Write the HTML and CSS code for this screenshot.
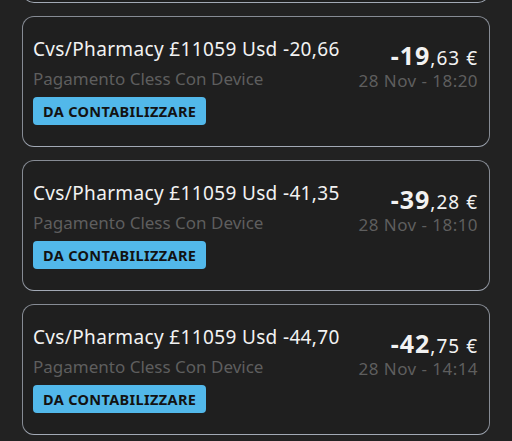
FILE: index.html
```html
<!DOCTYPE html>
<html lang="it">
<head>
<meta charset="utf-8">
<link rel="stylesheet" href="styles.css">
</head>
<body>
<div class="list">
  <div class="card card-empty" aria-hidden="true"></div>
  <div class="card">
    <div class="left">
      <div class="title">Cvs/Pharmacy £11059 Usd -20,66</div>
      <div class="sub">Pagamento Cless Con Device</div>
      <div class="badge">DA CONTABILIZZARE</div>
    </div>
    <div class="right">
      <div class="amount"><span class="int">-19</span>,63 €</div>
      <div class="date">28 Nov - 18:20</div>
    </div>
  </div>
  <div class="card">
    <div class="left">
      <div class="title">Cvs/Pharmacy £11059 Usd -41,35</div>
      <div class="sub">Pagamento Cless Con Device</div>
      <div class="badge">DA CONTABILIZZARE</div>
    </div>
    <div class="right">
      <div class="amount"><span class="int">-39</span>,28 €</div>
      <div class="date">28 Nov - 18:10</div>
    </div>
  </div>
  <div class="card">
    <div class="left">
      <div class="title">Cvs/Pharmacy £11059 Usd -44,70</div>
      <div class="sub">Pagamento Cless Con Device</div>
      <div class="badge">DA CONTABILIZZARE</div>
    </div>
    <div class="right">
      <div class="amount"><span class="int">-42</span>,75 €</div>
      <div class="date">28 Nov - 14:14</div>
    </div>
  </div>
</div>
</body>
</html>
```
FILE: styles.css
```css
html, body {
  margin: 0;
  padding: 0;
  background: #222222;
  overflow: hidden;
  height: 441px;
}
body {
  font-family: "Noto Sans", "DejaVu Sans", sans-serif;
  color: #f2f2f2;
}
.list {
  margin-top: -128px;
  padding: 0 22px;
  display: flex;
  flex-direction: column;
  gap: 13px;
}
.card {
  box-sizing: border-box;
  height: 131px;
  border: 1px solid #868b94;
  border-bottom-color: #a2a9b5;
  border-radius: 12px;
  background: #1f1f1f;
  padding: 20px 11px 0 10px;
  display: flex;
  justify-content: space-between;
}
.left {
  display: flex;
  flex-direction: column;
  align-items: flex-start;
}
.title {
  font-size: 19px;
  line-height: 24px;
  letter-spacing: 0.35px;
  white-space: nowrap;
}
.sub {
  margin-top: 8px;
  font-size: 17px;
  line-height: 20px;
  color: #5e5e5e;
  white-space: nowrap;
}
.badge {
  margin-top: 8px;
  background: #52b8ea;
  color: #121212;
  font-weight: 700;
  font-size: 14.5px;
  line-height: 28px;
  height: 28px;
  padding: 0 10px 0 10px;
  border-radius: 4px;
  letter-spacing: 0.35px;
}
.right {
  padding-top: 4px;
  display: flex;
  flex-direction: column;
  align-items: flex-end;
}
.amount {
  font-size: 19px;
  line-height: 28px;
  letter-spacing: 1px;
  white-space: nowrap;
}
.int {
  font-size: 25px;
  font-weight: 700;
  letter-spacing: 1px;
}
.date {
  margin-top: -1px;
  font-size: 17px;
  line-height: 20px;
  letter-spacing: 0.45px;
  color: #5e5e5e;
  white-space: nowrap;
}
```
